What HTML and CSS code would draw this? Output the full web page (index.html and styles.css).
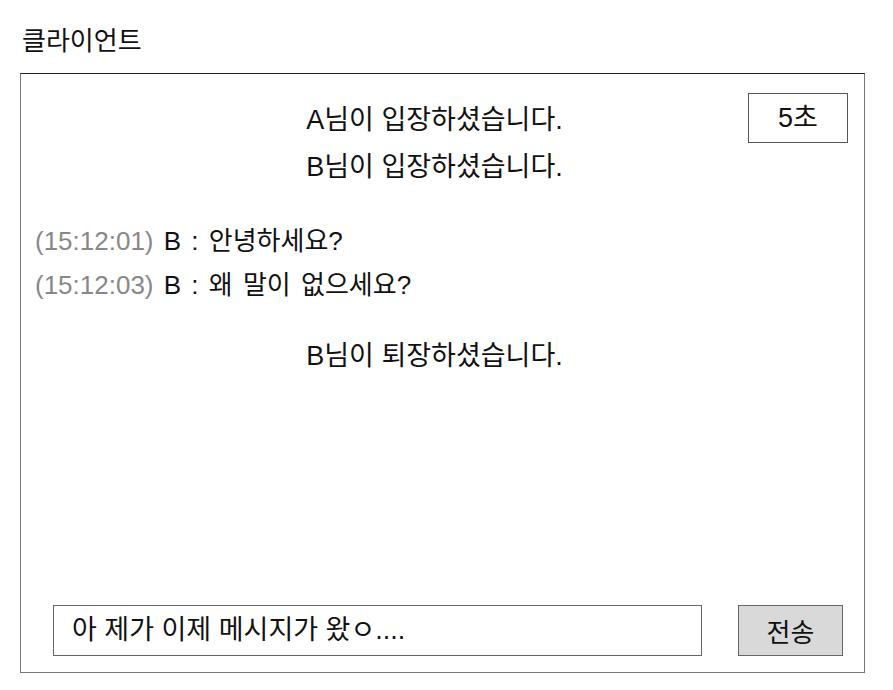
FILE: index.html
```html
<!DOCTYPE html>
<html>
<head>
<meta charset="utf-8">
<title>클라이언트</title>
<link rel="stylesheet" href="styles.css">
</head>
<body>

<h1 class="title">클라이언트</h1>

<div class="chatWindow">
  <div class="timer">5초</div>

  <div class="log">
    <div class="notices">
      <div class="notice">A님이 입장하셨습니다.</div>
      <div class="notice">B님이 입장하셨습니다.</div>
    </div>

    <div class="lines">
      <div class="line"><span class="time">(15:12:01)</span> B : 안녕하세요?</div>
      <div class="line"><span class="time">(15:12:03)</span> B : 왜 말이 없으세요?</div>
    </div>

    <div class="notices">
      <div class="notice">B님이 퇴장하셨습니다.</div>
    </div>
  </div>

  <div class="composer">
    <div class="input">아 제가 이제 메시지가 왔ㅇ....</div>
    <button class="send">전송</button>
  </div>
</div>

</body>
</html>
```

FILE: styles.css
```css
body {
  margin: 0;
  padding: 0 20px;
  background: #fff;
  color: #111;
  font-family: "Liberation Sans", "Noto Sans CJK KR", sans-serif;
}

.title {
  margin: 0;
  height: 73px;
  box-sizing: border-box;
  padding-top: 26px;
  padding-left: 2px;
  font-size: 26px;
  font-weight: normal;
  line-height: 30px;
}

.chatWindow {
  position: relative;
  width: 845px;
  height: 600px;
  box-sizing: border-box;
  border: 1px solid #777;
  border-top-color: #222;
  display: flex;
  flex-direction: column;
}

.timer {
  position: absolute;
  top: 19px;
  right: 16px;
  width: 100px;
  height: 50px;
  box-sizing: border-box;
  border: 1px solid #555;
  font-size: 27px;
  line-height: 48px;
  text-align: center;
}

.log {
  flex-grow: 1;
  padding-top: 23px;
  font-size: 27px;
}

.notices {
  padding-right: 16px;
}

.notice {
  text-align: center;
  line-height: 47px;
}

.lines {
  margin-top: 28px;
  margin-bottom: 26px;
  padding-left: 14px;
  font-size: 26px;
  word-spacing: 3px;
}

.line {
  line-height: 44px;
}

.time {
  color: #888;
}

.composer {
  display: flex;
  gap: 36px;
  padding: 0 21px 16px 32px;
}

.input {
  flex-grow: 1;
  height: 51px;
  box-sizing: border-box;
  border: 1px solid #666;
  padding-left: 18px;
  font-size: 27px;
  line-height: 49px;
}

.send {
  width: 105px;
  height: 51px;
  box-sizing: border-box;
  border: 1px solid #666;
  background: #d9d9d9;
  font-family: inherit;
  font-size: 26px;
  color: #111;
  padding: 0;
}
```
